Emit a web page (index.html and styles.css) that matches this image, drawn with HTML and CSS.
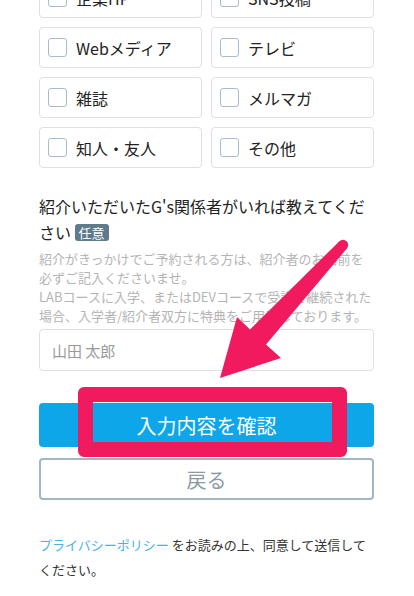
FILE: index.html
```html
<!DOCTYPE html>
<html lang="ja">
  <head>
    <meta charset="UTF-8" />
    <meta name="viewport" content="width=device-width, initial-scale=1.0" />
    <title>お問い合わせ</title>
    <link rel="stylesheet" href="styles.css">
  </head>
  <body>
    <div class="page">
      <div class="sources">
        <label class="option"><span class="box"></span>企業HP</label>
        <label class="option"><span class="box"></span>SNS投稿</label>
        <label class="option"><span class="box"></span>Webメディア</label>
        <label class="option"><span class="box"></span>テレビ</label>
        <label class="option"><span class="box"></span>雑誌</label>
        <label class="option"><span class="box"></span>メルマガ</label>
        <label class="option"><span class="box"></span>知人・友人</label>
        <label class="option"><span class="box"></span>その他</label>
      </div>

      <div class="question">
        <h2 class="question-title">紹介いただいたG's関係者がいれば教えてください <span class="badge">任意</span></h2>
        <p class="note">
          紹介がきっかけでご予約される方は、紹介者のお名前を必ずご記入くださいませ。<br />
          LABコースに入学、またはDEVコースで受講を継続された場合、入学者/紹介者双方に特典をご用意しております。
        </p>
        <input class="text-input" type="text" placeholder="山田 太郎" />
      </div>

      <div class="actions">
        <button class="btn btn-primary">入力内容を確認</button>
        <button class="btn btn-back">戻る</button>
        <div class="highlight"></div>
      </div>

      <p class="privacy"><a href="#">プライバシーポリシー</a> をお読みの上、同意して送信してください。</p>
    </div>

    <svg class="arrow" width="414" height="596" viewBox="0 0 414 596">
      <circle cx="343" cy="245" r="5.2" fill="#f21a5e" />
      <polygon fill="#f21a5e" points="339.2,241.4 250,329.5 237,317 220,378 281,358 266,344.5 346.8,248.6" />
    </svg>
  </body>
</html>
```

FILE: styles.css
```css
body {
  margin: 0;
  background: #fff;
  color: #222;
  font-family: "Noto Sans CJK JP", "Noto Sans", sans-serif;
  overflow: hidden;
}
.page {
  padding: 0 40px 0 39px;
}
.sources {
  margin-top: -23px;
  display: grid;
  grid-template-columns: 1fr 1fr;
  gap: 9px;
}
.option {
  height: 41px;
  box-sizing: border-box;
  border: 1px solid #e0e0e0;
  border-radius: 4px;
  display: flex;
  align-items: center;
  gap: 9px;
  padding-left: 8px;
  font-size: 16px;
  color: #222;
}
.box {
  width: 19px;
  height: 19px;
  box-sizing: border-box;
  border: 1.5px solid #a9bccb;
  border-radius: 3px;
  background: #fff;
}
.question {
  margin-top: 25px;
}
.question-title {
  margin: 0;
  font-size: 16px;
  font-weight: 400;
  line-height: 26px;
}
.badge {
  display: inline-block;
  vertical-align: 1px;
  background: #5d7b8b;
  color: #fff;
  font-size: 13px;
  line-height: 17px;
  padding: 0 4px;
  border-radius: 3px;
}
.note {
  margin: 4px 0 0;
  font-size: 13px;
  line-height: 19px;
  color: #b4b4b4;
}
.text-input {
  display: block;
  margin-top: 4px;
  width: 100%;
  height: 42px;
  box-sizing: border-box;
  border: 1px solid #e0e0e0;
  border-radius: 4px;
  padding: 0 12px;
  font-family: inherit;
  font-size: 15px;
}
.text-input::placeholder {
  color: #9a9a9a;
}
.actions {
  position: relative;
  margin-top: 32px;
}
.btn {
  display: block;
  width: 100%;
  box-sizing: border-box;
  font-family: inherit;
  font-size: 20px;
  border-radius: 4px;
}
.btn-primary {
  height: 44px;
  border: none;
  background: #0ca6e9;
  color: #fff;
}
.btn-back {
  margin-top: 11px;
  height: 42px;
  border: 2px solid #a3b6c4;
  background: #fff;
  color: #8b9ba6;
}
.highlight {
  position: absolute;
  left: 39px;
  top: -16px;
  width: 269px;
  height: 70px;
  box-sizing: border-box;
  border: 15px solid #f21a5e;
  border-radius: 6px;
}
.privacy {
  margin: 32px 0 0;
  font-size: 13px;
  line-height: 25px;
  color: #333;
}
.privacy a {
  color: #45b3e6;
  text-decoration: none;
}
.arrow {
  position: absolute;
  left: 0;
  top: 0;
}
```
